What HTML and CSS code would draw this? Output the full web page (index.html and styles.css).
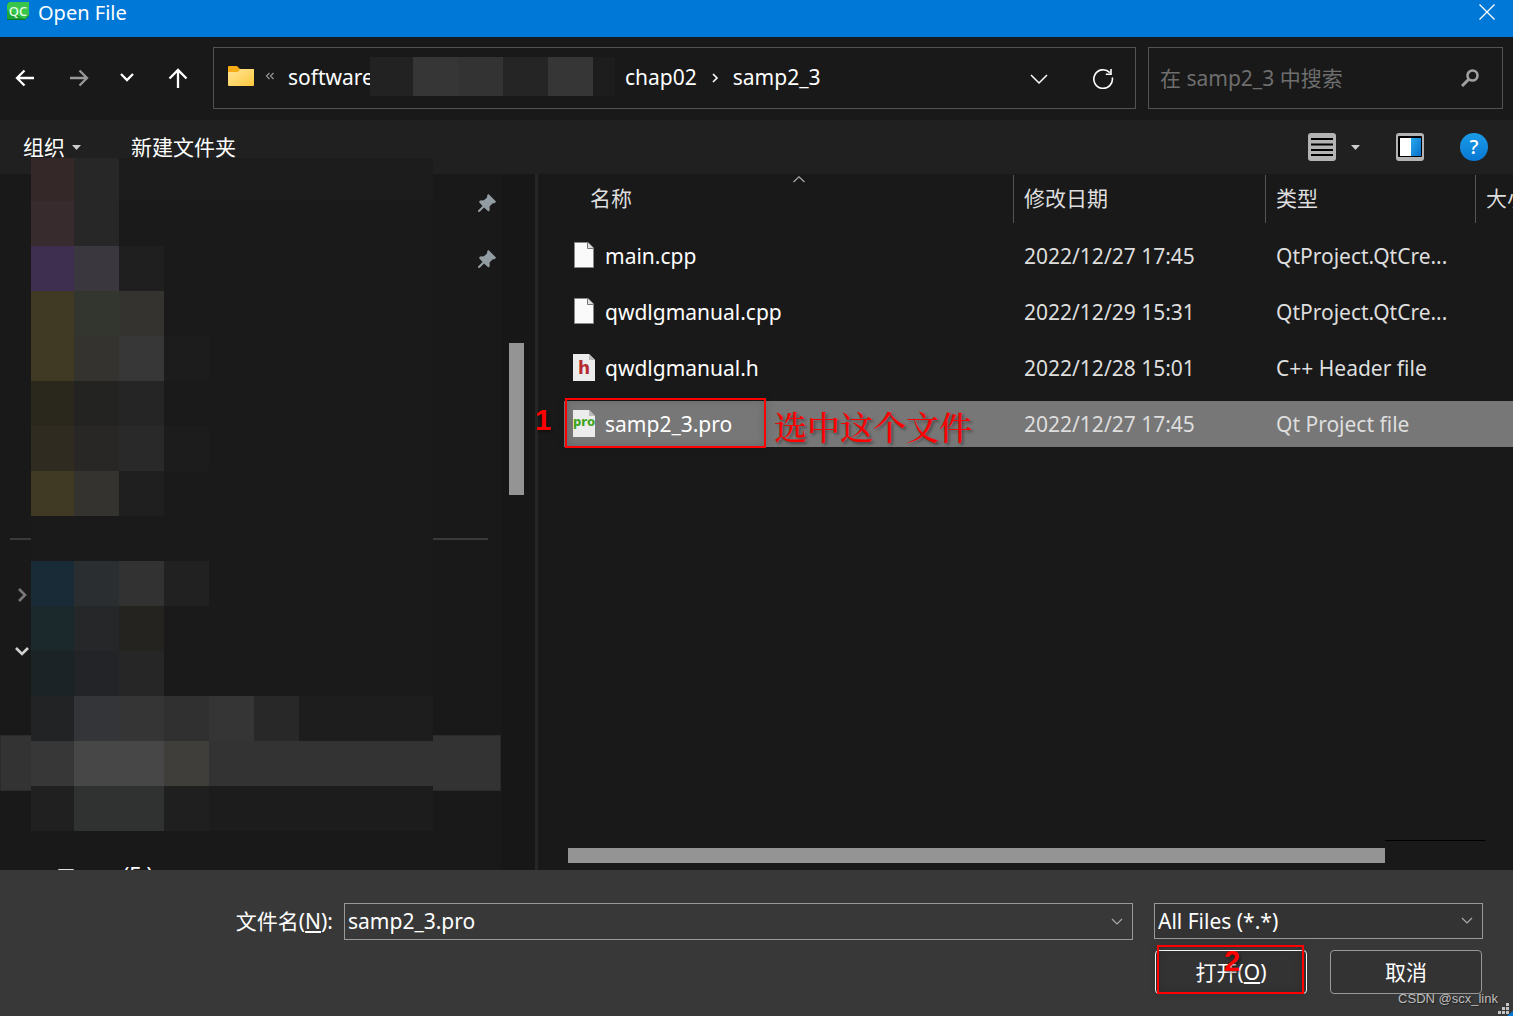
FILE: index.html
```html
<!DOCTYPE html>
<html lang="zh-CN">
<head>
<meta charset="utf-8">
<title>Open File</title>
<link rel="stylesheet" href="styles.css">
</head>
<body>
<div class="dialog">
  <header class="titlebar">
    <svg class="app-icon" width="24" height="20" viewBox="0 0 24 20"><path d="M3 1H23V15L19 19H1V4Z" fill="#087a2c"/><path d="M3 1H23V14L19 18H1V4Z" fill="#37c64b"/><path d="M1 18V9L19 18Z" fill="#1ca536"/><text x="12" y="15" text-anchor="middle" font-family="Noto Sans" font-size="13" font-weight="500" fill="#e8ffe9">QC</text></svg>
    <h1 class="title">Open File</h1>
    <button class="close" aria-label="关闭"><svg width="16" height="16" viewBox="0 0 16 16"><path d="M.5.5l15 15M15.500.5l-15 15" stroke="#fff" stroke-width="1.300"/></svg></button>
  </header>

  <nav class="navbar">
    <button class="nav-btn back" aria-label="后退"><svg width="20" height="20" viewBox="0 0 20 20"><path d="M19 10H2M9.500 2.500L2 10l7.500 7.500" class="line"/></svg></button>
    <button class="nav-btn forward" aria-label="前进"><svg width="20" height="20" viewBox="0 0 20 20"><path d="M1 10h17M10.500 2.500L18 10l-7.500 7.500" class="line"/></svg></button>
    <button class="nav-btn recent" aria-label="最近位置"><svg width="20" height="20" viewBox="0 0 20 20"><path d="M4 6l6 6 6-6" class="line"/></svg></button>
    <button class="nav-btn up" aria-label="上移"><svg width="20" height="22" viewBox="0 0 20 22"><path d="M10 21V3M1.500 11.500L10 3l8.500 8.500" class="line"/></svg></button>
    <div class="address">
      <svg class="folder" width="26" height="22" viewBox="0 0 26 22"><defs><linearGradient id="fold" x1="0" y1="0" x2="1" y2="1"><stop offset="0" stop-color="#ffe69a"/><stop offset="1" stop-color="#ffc83c"/></linearGradient></defs><path d="M0 2q0-1 1-1h8l3 3h12.500v6H0z" fill="#f5ac16"/><path d="M0 7h9.500l3-3H26v16q0 1-1 1H1q-1 0-1-1z" fill="url(#fold)"/></svg>
      <svg class="overflow" width="10" height="10" viewBox="0 0 10 10"><path d="M4.500 2L1.500 5l3 3M8.500 2l-3 3 3 3" fill="none" stroke="#999" stroke-width="1.200"/></svg>
      <a class="crumb cut" href="#">software</a>
      <svg class="strip" width="245" height="39" viewBox="0 0 245 39" shape-rendering="crispEdges"><path fill="#222" d="M0 0h43v39H0z"/><path fill="#363636" d="M43 0h45v39H43z"/><path fill="#333" d="M88 0h45v39H88z"/><path fill="#252525" d="M133 0h45v39h-45z"/><path fill="#363636" d="M178 0h45v39h-45z"/><path fill="#1d1d1d" d="M223 0h22v39h-22z"/></svg>
      <a class="crumb" href="#">chap02</a>
      <svg class="sep" width="8" height="12" viewBox="0 0 8 12"><path d="M2 2l4 4-4 4" fill="none" stroke="#fff" stroke-width="1.600"/></svg>
      <a class="crumb" href="#">samp2_3</a>
      <button class="addr-btn drop" aria-label="历史记录"><svg width="20" height="20" viewBox="0 0 20 20"><path d="M2 7l8 8 8-8" fill="none" stroke="#fff" stroke-width="1.500"/></svg></button>
      <button class="addr-btn" aria-label="刷新"><svg width="22" height="22" viewBox="0 0 22 22"><path d="M20.300 10.500A9.300 9.300 0 1 1 17.800 5.600M19 2v5.200h-5.200" fill="none" stroke="#fff" stroke-width="1.600"/></svg></button>
    </div>
    <label class="search">
      <input type="search" placeholder="在 samp2_3 中搜索" aria-label="在 samp2_3 中搜索">
      <svg width="18" height="18" viewBox="0 0 18 18"><circle cx="11.500" cy="6.500" r="5" fill="none" stroke="#a0a0a0" stroke-width="2.600"/><path d="M8 10l-7 7" stroke="#a0a0a0" stroke-width="3"/></svg>
    </label>
  </nav>

  <div class="toolbar">
    <button class="tool organize">组织<svg width="9" height="5" viewBox="0 0 9 5"><path d="M0 0h9L4.500 5z" fill="#ccc"/></svg></button>
    <button class="tool">新建文件夹</button>
    <div class="tool-icons">
      <button class="tool view" aria-label="更改视图"><svg width="28" height="28" viewBox="0 0 28 28"><rect width="28" height="28" rx="3" fill="#b3b3b3"/><path d="M3 6h22M3 11.500h22M3 17h22M3 22h22" stroke="#000" stroke-width="2"/></svg><svg width="9" height="5" viewBox="0 0 9 5"><path d="M0 0h9L4.500 5z" fill="#ccc"/></svg></button>
      <button class="tool" aria-label="预览窗格"><svg width="28" height="28" viewBox="0 0 28 28"><defs><linearGradient id="pane" x1="0" y1="0" x2="1" y2="1"><stop offset="0" stop-color="#28a8ec"/><stop offset="1" stop-color="#0870cc"/></linearGradient></defs><rect width="28" height="28" rx="3" fill="#b3b3b3"/><rect x="2" y="3" width="24" height="21" rx="1" fill="#000"/><path fill="#fff" d="M4 5h11v18H4z"/><path fill="url(#pane)" d="M15 5h10v18H15z"/></svg></button>
      <button class="tool" aria-label="帮助"><svg width="28" height="28" viewBox="0 0 28 28"><defs><linearGradient id="help" x1="0" y1="0" x2="0" y2="1"><stop offset="0" stop-color="#1b9be6"/><stop offset="1" stop-color="#0878d4"/></linearGradient></defs><circle cx="14" cy="14" r="14" fill="url(#help)"/><text x="14" y="21" text-anchor="middle" font-family="Noto Sans" font-size="20" font-weight="500" fill="#fff">?</text></svg></button>
    </div>
  </div>

  <div class="content">
    <aside class="sidebar">
      <ul class="tree">
        <li class="node pinned"><svg width="18" height="18" viewBox="0 0 18 18"><path d="M10.500 0l7.500 7.500-1 1.500-2.500.5-3 3 .2 3.800-1.200 1.200-4.500-4L1.500 18 0 17.800V16.500L4.500 12 1 8l1-1.500 4-.3L9 3.500l.3-2.500z" fill="#929ca3"/></svg></li>
        <li class="node pinned"><svg width="18" height="18" viewBox="0 0 18 18"><path d="M10.500 0l7.500 7.500-1 1.500-2.500.5-3 3 .2 3.800-1.200 1.200-4.500-4L1.500 18 0 17.800V16.500L4.500 12 1 8l1-1.500 4-.3L9 3.500l.3-2.500z" fill="#929ca3"/></svg></li>
        <li class="node"></li>
        <li class="node"></li>
        <li class="node"></li>
        <li class="node"></li>
        <li class="node divider"></li>
        <li class="node"><svg width="14" height="14" viewBox="0 0 14 14"><path d="M4 1l6 6-6 6" fill="none" stroke="#787878" stroke-width="2.600"/></svg></li>
        <li class="node"><svg width="14" height="14" viewBox="0 0 14 14"><path d="M1 4l6 6 6-6" fill="none" stroke="#d2d2d2" stroke-width="2.600"/></svg></li>
        <li class="node"></li>
        <li class="node current"></li>
        <li class="node"></li>
        <li class="node drive"><svg width="16" height="12" viewBox="0 0 16 12"><rect y="0" width="16" height="12" rx="1" fill="#ddd"/></svg><span>(E:)</span></li>
      </ul>
      <svg class="mosaic" width="402" height="673" viewBox="0 0 402 673" shape-rendering="crispEdges">
        <path fill="#1a1a1a" d="M0 0h402v673H0z"/>
        <path fill="#1c1c1c" d="M88 0h314v43H88zM178 178h-45v45h45zM133 268h45v45h-45z"/>
        <path fill="#342928" d="M0 0h43v43H0z"/><path fill="#282728" d="M43 0h45v88H43z"/>
        <path fill="#382b2d" d="M0 43h43v45H0z"/>
        <path fill="#3e2f50" d="M0 88h43v45H0z"/><path fill="#3a373f" d="M43 88h45v45H43z"/><path fill="#1f1f1f" d="M88 88h45v45H88zM88 313h45v45H88z"/>
        <path fill="#403924" d="M0 133h43v90H0zM0 313h43v45H0z"/><path fill="#33352f" d="M43 133h45v45H43z"/><path fill="#343330" d="M43 178h45v45H43zM43 313h45v45H43zM88 133h45v45H88z"/><path fill="#373737" d="M88 178h45v45H88z"/>
        <path fill="#2a281d" d="M0 223h43v45H0z"/><path fill="#232321" d="M43 223h45v45H43z"/><path fill="#252525" d="M88 223h45v45H88z"/>
        <path fill="#2f2b21" d="M0 268h43v45H0z"/><path fill="#282725" d="M43 268h45v45H43z"/><path fill="#292929" d="M88 268h45v45H88z"/>
        <path fill="#182b37" d="M0 403h43v45H0z"/><path fill="#2b2e31" d="M43 403h45v45H43z"/><path fill="#323232" d="M88 403h45v45H88z"/><path fill="#212121" d="M133 403h45v45h-45z"/>
        <path fill="#1c292c" d="M0 448h43v45H0z"/><path fill="#262729" d="M43 448h45v45H43z"/><path fill="#242320" d="M88 448h45v45H88z"/>
        <path fill="#1b2327" d="M0 493h43v45H0z"/><path fill="#232427" d="M43 493h45v45H43z"/><path fill="#262626" d="M88 493h45v45H88z"/>
        <path fill="#1d1d1d" d="M268 538h134v45H268z"/><path fill="#222325" d="M0 538h43v45H0z"/><path fill="#343538" d="M43 538h45v45H43z"/><path fill="#353535" d="M88 538h45v45H88zM178 538h45v45h-45z"/><path fill="#303030" d="M133 538h45v45h-45z"/><path fill="#282828" d="M223 538h45v45h-45z"/>
        <path fill="#333" d="M178 583h224v45H178z"/><path fill="#373737" d="M0 583h43v45H0z"/><path fill="#474747" d="M43 583h90v45H43z"/><path fill="#3f3e3a" d="M133 583h45v45h-45z"/>
        <path fill="#1c1c1c" d="M178 628h224v45H178z"/><path fill="#202020" d="M0 628h43v45H0z"/><path fill="#303231" d="M43 628h90v45H43z"/><path fill="#1f1f1f" d="M133 628h45v45h-45z"/>
      </svg>
      <div class="side-scroll"><div class="side-thumb"></div></div>
    </aside>

    <main class="files">
      <table class="file-table">
        <colgroup><col><col class="col-date"><col class="col-type"><col class="col-size"></colgroup>
        <thead>
          <tr>
            <th class="name-head">名称<svg class="sort" width="12" height="7" viewBox="0 0 12 7"><path d="M.5 6L6 .8 11.500 6" fill="none" stroke="#aaa" stroke-width="1.200"/></svg></th>
            <th>修改日期</th><th>类型</th><th>大小</th>
          </tr>
        </thead>
        <tbody>
          <tr>
            <td><div class="file"><svg width="26" height="28" viewBox="0 0 26 28"><path d="M3.500 .5H17L22.500 6v19.500h-19z" fill="#fafafa" stroke="#888"/><path d="M16.500 .5v6h6" fill="#ddd" stroke="#777"/></svg>main.cpp</div></td>
            <td>2022/12/27 17:45</td><td>QtProject.QtCre...</td><td></td>
          </tr>
          <tr>
            <td><div class="file"><svg width="26" height="28" viewBox="0 0 26 28"><path d="M3.500 .5H17L22.500 6v19.500h-19z" fill="#fafafa" stroke="#888"/><path d="M16.500 .5v6h6" fill="#ddd" stroke="#777"/></svg>qwdlgmanual.cpp</div></td>
            <td>2022/12/29 15:31</td><td>QtProject.QtCre...</td><td></td>
          </tr>
          <tr>
            <td><div class="file"><svg width="26" height="28" viewBox="0 0 26 28"><path d="M2 0h16l6 6v21H2z" fill="#ececec"/><path d="M18 0v6h6z" fill="#bbb"/><text x="13" y="20" text-anchor="middle" font-family="DejaVu Sans" font-weight="700" font-size="17" fill="#b52a30">h</text></svg>qwdlgmanual.h</div></td>
            <td>2022/12/28 15:01</td><td>C++ Header file</td><td></td>
          </tr>
          <tr class="selected">
            <td><div class="file"><svg width="26" height="28" viewBox="0 0 26 28"><path d="M2 0h16l6 6v21H2z" fill="#ececec"/><path d="M18 0v6h6z" fill="#bbb"/><text x="13" y="16" text-anchor="middle" font-family="Noto Sans" font-weight="800" font-size="13" fill="#3fa51e">pro</text></svg>samp2_3.pro<span class="mark step-one">1</span><span class="mark-box pick-file"></span><span class="mark-text">选中这个文件</span></div></td>
            <td>2022/12/27 17:45</td><td>Qt Project file</td><td></td>
          </tr>
        </tbody>
      </table>
      <div class="bottom-scroll"><div class="bottom-thumb"></div><div class="bottom-rest"></div></div>
    </main>
  </div>

  <footer class="footer">
    <label class="name-label" for="filename">文件名(<u>N</u>):</label>
    <div class="combo">
      <input id="filename" type="text" value="samp2_3.pro">
      <svg width="12" height="8" viewBox="0 0 12 8"><path d="M1 1l5 5 5-5" fill="none" stroke="#aaa" stroke-width="1.200"/></svg>
    </div>
    <div class="choices">
      <div class="combo filter">
        <select aria-label="文件类型"><option>All Files (*.*)</option></select>
        <svg width="12" height="8" viewBox="0 0 12 8"><path d="M1 1l5 5 5-5" fill="none" stroke="#aaa" stroke-width="1.200"/></svg>
      </div>
      <div class="actions">
        <button class="action primary">打开(<u>O</u>)<span class="mark-box pick-open"></span><span class="mark step-two">2</span></button>
        <button class="action">取消</button>
      </div>
    </div>
    <span class="credit">CSDN @scx_link</span>
    <svg class="grip" width="15" height="14" viewBox="0 0 15 14"><path d="M15 9v5H9z" fill="#0078d7"/><path fill="#c4c4c4" d="M8 1h3v3H8zM4 5h3v3H4zM8 5h3v3H8zM0 9h3v3H0zM4 9h3v3H4zM8 9h3v3H8z"/></svg>
  </footer>
</div>
</body>
</html>
```

FILE: styles.css
```css
* {
  box-sizing: border-box;
}

body {
  margin: 0;
  background: #191919;
  color: #fff;
  font: 21px/28px "Noto Sans", "Noto Sans CJK SC", sans-serif;
}

button,
input,
select {
  margin: 0;
  padding: 0;
  border: 0;
  background: none;
  color: inherit;
  font: inherit;
}

a {
  color: inherit;
  text-decoration: none;
}

svg {
  display: block;
  flex: none;
}

.dialog {
  display: flex;
  flex-direction: column;
  height: 100vh;
  min-height: 640px;
  overflow: hidden;
}

/* Title bar */
.titlebar {
  display: flex;
  align-items: flex-start;
  flex: none;
  height: 37px;
  padding: 0 18px 0 6px;
  background: #0078d7;
}

.app-icon {
  margin-top: 1px;
}

.title {
  flex: 1;
  margin: 0 0 0 8px;
  font-size: 20px;
  font-weight: 400;
  line-height: 26px;
}

.close {
  margin-top: 4px;
}

/* Navigation row */
.navbar {
  display: flex;
  flex: none;
  height: 83px;
  padding: 10px 10px 11px 0;
}

.nav-btn {
  display: flex;
  align-items: center;
  justify-content: center;
  flex: none;
}

.back {
  width: 50px;
}

.forward {
  width: 58px;
  color: #999;
}

.recent {
  width: 38px;
}

.up {
  width: 64px;
}

.line {
  fill: none;
  stroke: currentColor;
  stroke-width: 2.3;
}

.address {
  display: flex;
  align-items: center;
  flex: 1;
  min-width: 0;
  margin: 0 12px 0 3px;
  padding: 0 21px 4px 14px;
  border: 1px solid #535353;
}

.overflow {
  margin: 0 13px 0 11px;
}

.crumb {
  margin-top: 2px;
  white-space: nowrap;
}

.cut {
  flex: none;
  width: 82px;
  overflow: hidden;
}

.strip {
  margin-right: 10px;
}

.sep {
  margin: 4px 14px 0 14px;
}

.addr-btn {
  margin-top: 4px;
}

.drop {
  margin-left: auto;
  margin-right: 43px;
}

.search {
  display: flex;
  align-items: center;
  flex: 0 0 355px;
  padding: 0 23px 0 11px;
  border: 1px solid #535353;
}

.search input {
  flex: 1;
  min-width: 0;
  outline: 0;
}

.search input::placeholder {
  color: #6e6e6e;
}

/* Command row */
.toolbar {
  display: flex;
  align-items: center;
  flex: none;
  height: 54px;
  padding: 0 25px 0 23px;
  background: #202020;
}

.tool {
  display: flex;
  align-items: center;
}

.organize {
  gap: 7px;
  margin-right: 50px;
}

.tool-icons {
  display: flex;
  gap: 36px;
  margin-left: auto;
}

.view {
  gap: 15px;
}

/* Folder tree */
.content {
  display: flex;
  flex: 1;
  min-height: 0;
}

.sidebar {
  position: relative;
  display: flex;
  flex: 0 0 538px;
  border-right: 3px solid #262626;
}

.tree {
  flex: 1;
  margin: 0;
  padding: 1px 0 0;
  overflow: hidden;
  list-style: none;
}

.node {
  display: flex;
  align-items: center;
  height: 56px;
  padding: 0 5px 0 15px;
}

.pinned {
  justify-content: flex-end;
}

.divider::before {
  content: "";
  flex: 1;
  height: 2px;
  margin: 0 8px 0 -5px;
  background: #3a3a3a;
}

.current {
  background: #333;
  border: 1px solid #2b2b2b;
}

.drive {
  gap: 49px;
  padding-left: 58px;
}

.mosaic {
  position: absolute;
  top: -16px;
  left: 31px;
}

.side-scroll {
  flex: 0 0 34px;
  padding: 169px 11px 0 8px;
  background: #171717;
}

.side-thumb {
  height: 152px;
  background: #949494;
}

/* File list */
.files {
  display: flex;
  flex-direction: column;
  flex: 1;
  min-width: 0;
  padding-left: 26px;
}

.file-table {
  width: 100%;
  margin-top: -9px;
  table-layout: fixed;
  border-spacing: 0 10px;
  white-space: nowrap;
}

.col-date {
  width: 252px;
}

.col-type {
  width: 210px;
}

.col-size {
  width: 38px;
}

.file-table th {
  height: 48px;
  padding: 0 0 2px 10px;
  overflow: hidden;
  border-left: 1px solid #555;
  color: #dedede;
  font-weight: 400;
  text-align: left;
}

.file-table .name-head {
  position: relative;
  padding-left: 25px;
  border-left-color: transparent;
}

.sort {
  position: absolute;
  top: 1px;
  left: 51%;
}

.file-table td {
  height: 46px;
  padding: 0 0 0 11px;
  color: #dedede;
}

.file-table td:first-child {
  padding-left: 7px;
  color: #fff;
}

.file {
  position: relative;
  display: flex;
  align-items: center;
  gap: 8px;
}

.selected td {
  background: #777;
}

.bottom-scroll {
  display: flex;
  flex: none;
  height: 30px;
  margin-top: auto;
  padding: 0 28px 0 4px;
}

.bottom-thumb {
  flex: 1;
  height: 15px;
  margin-top: 8px;
  background: #949494;
}

.bottom-rest {
  flex: 0 0 100px;
  border-top: 1px solid #000;
}

/* Red markings over the dialog */
.mark,
.mark-box,
.mark-text {
  position: absolute;
  color: #f00;
  pointer-events: none;
}

.mark {
  font: 700 29px/30px "Liberation Sans", sans-serif;
  text-shadow: 2px 2px 3px rgba(0, 0, 0, 0.4);
}

.mark-box {
  border: 2px solid #f00;
  box-shadow: 0 0 8px rgba(0, 0, 0, 0.15), inset 0 0 8px rgba(0, 0, 0, 0.15);
}

.mark-text {
  top: -4px;
  left: 203px;
  font: 500 33px/40px "Noto Serif CJK SC", "Noto Sans CJK SC", serif;
  text-shadow: 2px 2px 3px rgba(0, 0, 0, 0.4);
}

.step-one {
  top: -5px;
  left: -36px;
}

.pick-file {
  top: -12px;
  left: -6px;
  width: 201px;
  height: 50px;
}

.pick-open {
  inset: -6px 2px -1px 1px;
}

.step-two {
  top: -5px;
  left: 50%;
  margin-left: -7px;
}

/* Footer */
.footer {
  position: relative;
  display: grid;
  grid-template-columns: 334px 1fr 329px;
  align-items: start;
  flex: none;
  height: 146px;
  padding: 33px 30px 0 0;
  background: #383838;
}

.name-label {
  padding-right: 1px;
  line-height: 36px;
  text-align: right;
}

.combo {
  display: flex;
  align-items: center;
  height: 37px;
  margin: 0 21px 0 10px;
  padding-right: 9px;
  border: 1px solid #999;
}

.combo input,
.combo select {
  flex: 1;
  min-width: 0;
  height: 35px;
  padding: 0 0 2px 3px;
  appearance: none;
  outline: 0;
}

.filter {
  height: 36px;
  margin: 0;
  background: #333;
}

.combo select {
  height: 34px;
  padding-bottom: 0;
}

.actions {
  display: flex;
  justify-content: space-between;
  padding: 11px 1px 0;
}

.action {
  position: relative;
  width: 152px;
  height: 44px;
  border: 1px solid #999;
  border-radius: 4px;
  background: #333;
}

.primary {
  border-color: #fff;
}

.credit {
  position: absolute;
  right: 15px;
  bottom: 7px;
  color: #bdbdbd;
  font: 13px/20px "Liberation Sans", sans-serif;
  text-shadow: 1px 1px 1px #222;
}

.grip {
  position: absolute;
  right: 0;
  bottom: 0;
}
```
